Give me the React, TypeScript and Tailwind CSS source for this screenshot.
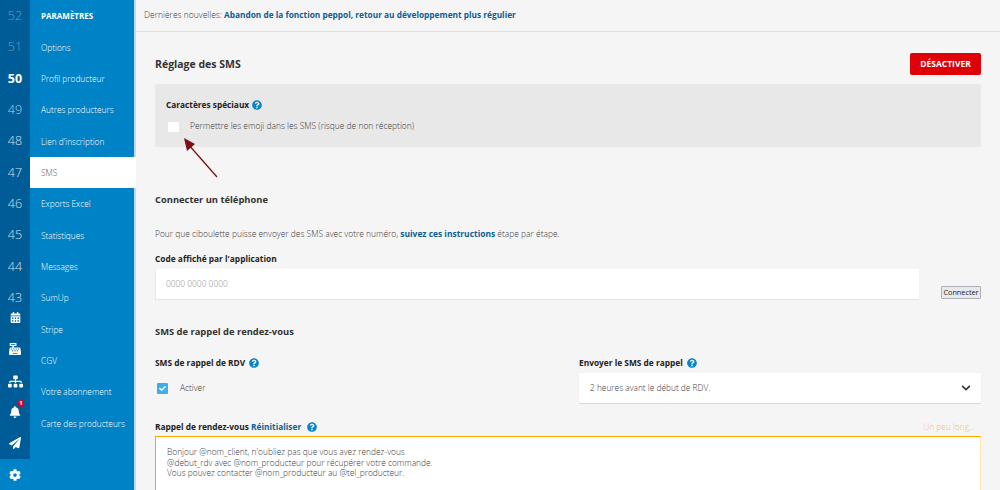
import { FaBell, FaCalendarAlt, FaCashRegister, FaChevronDown, FaCheck, FaCog, FaPaperPlane, FaQuestionCircle, FaSitemap } from 'react-icons/fa';

const NUMBERS = [
  { n: '52', cls: 'text-white/40 font-light' },
  { n: '51', cls: 'text-white/40 font-light' },
  { n: '50', cls: 'text-white font-bold' },
  { n: '49', cls: 'text-white/70 font-light' },
  { n: '48', cls: 'text-white/80 font-light' },
  { n: '47', cls: 'text-white/80 font-light' },
  { n: '46', cls: 'text-white/80 font-light' },
  { n: '45', cls: 'text-white/80 font-light' },
  { n: '44', cls: 'text-white/80 font-light' },
  { n: '43', cls: 'text-white/80 font-light' },
];

const MENU = ['Options', 'Profil producteur', 'Autres producteurs', "Lien d'inscription", 'SMS', 'Exports Excel', 'Statistiques', 'Messages', 'SumUp', 'Stripe', 'CGV', 'Votre abonnement', 'Carte des producteurs'];

function Help({ className = '' }: { className?: string }) {
  return <FaQuestionCircle className={`text-[10px] text-[#0a84c9] ${className}`} />;
}

function Rail() {
  return (
    <div className="w-[30px] flex flex-col bg-[#0082c6] text-white">
      <div className="h-[459px] shrink-0 bg-[#005c97] flex flex-col items-center">
        {NUMBERS.map(item => (
          <div key={item.n} className={`h-[31.33px] shrink-0 w-full flex items-center justify-center pt-[1px] text-[12.5px] leading-none ${item.cls}`}>
            {item.n}
          </div>
        ))}
        <div className="-mt-[11px] flex flex-col items-center">
          <div className="h-[31.33px] flex items-center"><FaCalendarAlt className="text-[11px]" /></div>
          <div className="h-[31.33px] flex items-center"><FaCashRegister className="text-[12px]" /></div>
          <div className="h-[31.33px] flex items-center pt-[1px]"><FaSitemap className="text-[15px]" /></div>
          <div className="h-[31.33px] flex items-center relative">
            <FaBell className="text-[12px]" />
            <span className="absolute left-[9px] top-[4px] w-[6px] h-[7px] rounded-full bg-[#e5001a] text-[6px] leading-[7px] font-bold text-center">1</span>
          </div>
          <div className="h-[31.33px] flex items-center"><FaPaperPlane className="text-[12px]" /></div>
        </div>
      </div>
      <div className="flex-1 flex items-center justify-center"><FaCog className="text-[12px]" /></div>
    </div>
  );
}

function Menu() {
  return (
    <div className="w-[106px] bg-[#0082c6] border-r-2 border-[#bcdcf1] text-white text-[8.3px] font-light">
      <div className="h-[31.33px] flex items-center pl-[11px] font-bold text-[8px]">PARAMÈTRES</div>
      {MENU.map(label => (
        <div
          key={label}
          className={`h-[31.33px] flex items-center pl-[11px] pt-[2px] whitespace-nowrap ${label === 'SMS' ? 'bg-white text-[#555] -mr-[2px]' : ''}`}
        >
          {label}
        </div>
      ))}
    </div>
  );
}

function Arrow() {
  return (
    <svg className="absolute left-[26px] top-[51px]" width="40" height="44" viewBox="0 0 40 44" fill="none">
      <path d="M36 42 L7 9" stroke="#7d0f14" strokeWidth="1.3" />
      <path d="M3 3 L14 9 L6 16 Z" fill="#7d0f14" />
    </svg>
  );
}

export default function App() {
  return (
    <div className="h-[490px] w-[1000px] overflow-hidden flex bg-[#f5f5f5] text-[#3a3a3a] font-['Open_Sans',sans-serif]">
      <Rail />
      <Menu />
      <main className="flex-1 min-w-0">
        <div className="h-[32px] border-b border-[#e0e0e0] pl-[8px] flex items-center text-[8.3px]">
          <span className="font-light text-[8.5px]">Dernières nouvelles:&nbsp;</span>
          <span className="font-bold text-[#0b5f97]">Abandon de la fonction peppol, retour au développement plus régulier</span>
        </div>
        <div className="px-[19px]">
          <div className="mt-[21px] h-[22px] flex items-center justify-between">
            <h1 className="mt-[1px] text-[10.5px] font-bold text-[#333]">Réglage des SMS</h1>
            <button className="w-[71px] h-[22px] rounded-[2px] bg-[#e00007] text-white text-[8.5px] font-bold">DÉSACTIVER</button>
          </div>

          <div className="relative mt-[9px] h-[62px] bg-[#e8e8e8] rounded-[2px] pl-[11px] pt-[15px] shadow-[0_1px_1px_rgba(0,0,0,0.05)]">
            <div className="h-[12px] flex items-center gap-[3px] text-[8.3px] font-bold text-[#222]">
              Caractères spéciaux <Help />
            </div>
            <div className="mt-[10px] h-[11px] flex items-center">
              <span className="w-[11px] h-[10px] ml-[2px] bg-white rounded-[1px]" />
              <span className="ml-[11px] text-[8.45px] font-light">Permettre les emoji dans les SMS (risque de non réception)</span>
            </div>
            <Arrow />
          </div>

          <h2 className="mt-[47px] h-[14px] leading-[14px] text-[9.37px] font-bold text-[#333]">Connecter un téléphone</h2>
          <p className="mt-[20px] h-[14px] leading-[14px] text-[8.43px] font-light">
            Pour que ciboulette puisse envoyer des SMS avec votre numéro, <span className="font-bold text-[#0b5f97]">suivez ces instructions</span> étape par étape.
          </p>
          <div className="mt-[11px] h-[14px] leading-[14px] text-[8.36px] font-bold text-[#222]">Code affiché par l'application</div>
          <div className="mt-[3px] flex items-end">
            <div className="w-[764px] h-[30px] bg-white border-l border-[#e8e8e8] flex items-center pl-[10px] text-[8.4px] font-light text-[#888] shadow-[0_1px_1px_rgba(0,0,0,0.06)]">
              0000 0000 0000
            </div>
            <button className="ml-[22px] w-[40px] h-[13px] bg-[#e9e9ed] border border-[#b0b0b8] rounded-[1px] text-[7.3px] leading-none text-[#222]">Connecter</button>
          </div>

          <h2 className="mt-[26px] h-[14px] leading-[14px] text-[9.37px] font-bold text-[#333]">SMS de rappel de rendez-vous</h2>

          <div className="mt-[18px] flex">
            <div className="w-[424px]">
              <div className="h-[12px] flex items-center gap-[4px] text-[8.36px] font-bold text-[#222]">
                SMS de rappel de RDV <Help />
              </div>
              <div className="mt-[14px] h-[11px] flex items-center">
                <span className="ml-[2px] w-[11px] h-[11px] bg-[#3daee9] flex items-center justify-center rounded-[1px]">
                  <FaCheck className="text-[7px] text-white" />
                </span>
                <span className="ml-[12px] text-[8.4px] font-light">Activer</span>
              </div>
            </div>
            <div className="flex-1">
              <div className="h-[12px] flex items-center gap-[4px] text-[8.36px] font-bold text-[#222]">
                Envoyer le SMS de rappel <Help />
              </div>
              <div className="mt-[4px] h-[30px] bg-white rounded-[2px] flex items-center justify-between pl-[11px] pr-[10px] text-[8.35px] font-light shadow-[0_1px_1px_rgba(0,0,0,0.12)]">
                2 heures avant le début de RDV.
                <FaChevronDown className="text-[10px] text-[#333]" />
              </div>
            </div>
          </div>

          <div className="mt-[18px] h-[12px] flex items-center text-[8.36px] font-bold text-[#222]">
            Rappel de rendez-vous&nbsp;<span className="text-[#0b5f97]">Réinitialiser</span>
            <Help className="ml-[6px]" />
            <span className="ml-auto mr-[6px] font-light text-[#f9c25d]">Un peu long...</span>
          </div>
          <div className="mt-[3px] h-[60px] bg-white border-t border-l border-r border-t-[#ffa500] border-l-[#ffa500] border-r-[#ffe3ad] pl-[11px] pt-[10px] text-[8.38px] leading-[10.6px] font-light">
            Bonjour @nom_client, n'oubliez pas que vous avez rendez-vous
            <br />
            @debut_rdv avec @nom_producteur pour récupérer votre commande.
            <br />
            Vous pouvez contacter @nom_producteur au @tel_producteur.
          </div>
        </div>
      </main>
    </div>
  );
}
